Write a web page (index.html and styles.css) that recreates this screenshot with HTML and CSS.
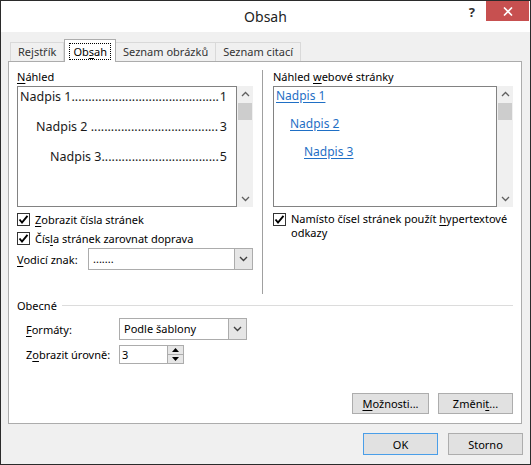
FILE: index.html
```html
<!DOCTYPE html>
<html lang="cs">
<head>
    <meta charset="UTF-8">
    <title>Obsah</title>
    <link rel="stylesheet" href="styles.css">
</head>
<body>
<div class="window">
    <div class="titlebar">
        <div class="title">Obsah</div>
        <div class="title-tools">
            <span class="help">?</span>
            <span class="close">
                <svg width="10" height="9" viewBox="0 0 10 9"><path d="M1 0.5 L9 8.5 M9 0.5 L1 8.5" stroke="#fff" stroke-width="1.6" fill="none"/></svg>
            </span>
        </div>
    </div>

    <div class="content">
        <div class="tabs">
            <div class="tab">Rejstřík</div>
            <div class="tab active"><span class="focus">Ob<u>s</u>ah</span></div>
            <div class="tab">Seznam obrázků</div>
            <div class="tab">Seznam citací</div>
        </div>

        <div class="panel">
            <div class="columns">
                <!-- print preview -->
                <div class="col col-left">
                    <div class="label"><u>N</u>áhled</div>
                    <div class="preview">
                        <div class="preview-box toc">
                            <div class="toc-line lvl1"><span>Nadpis 1</span><span class="leader">............................................</span><span>1</span></div>
                            <div class="toc-line lvl2"><span>Nadpis 2</span><span class="leader">&nbsp;......................................</span><span>3</span></div>
                            <div class="toc-line lvl3"><span>Nadpis 3</span><span class="leader">...................................</span><span>5</span></div>
                        </div>
                        <div class="scrollbar">
                            <div class="sb-btn"><svg width="9" height="6" viewBox="0 0 9 6"><path d="M1 5 L4.5 1.5 L8 5" stroke="#606060" stroke-width="1.3" fill="none"/></svg></div>
                            <div class="sb-thumb"></div>
                            <div class="sb-track"></div>
                            <div class="sb-btn"><svg width="9" height="6" viewBox="0 0 9 6"><path d="M1 1 L4.5 4.5 L8 1" stroke="#606060" stroke-width="1.3" fill="none"/></svg></div>
                        </div>
                    </div>

                    <div class="check-row first">
                        <span class="checkbox"><svg width="11" height="11" viewBox="0 0 11 11"><path d="M1.5 5.5 L4 8.5 L9.5 1.8" stroke="#000" stroke-width="1.9" fill="none"/></svg></span>
                        <span><u>Z</u>obrazit čísla stránek</span>
                    </div>
                    <div class="check-row">
                        <span class="checkbox"><svg width="11" height="11" viewBox="0 0 11 11"><path d="M1.5 5.5 L4 8.5 L9.5 1.8" stroke="#000" stroke-width="1.9" fill="none"/></svg></span>
                        <span>Čís<u>l</u>a stránek zarovnat doprava</span>
                    </div>
                    <div class="field-row">
                        <span class="leader-label"><u>V</u>odicí znak:</span>
                        <div class="combo grow">
                            <span class="combo-value">.......</span>
                            <span class="combo-btn"><svg width="9" height="6" viewBox="0 0 9 6"><path d="M1 1 L4.5 4.5 L8 1" stroke="#404040" stroke-width="1.4" fill="none"/></svg></span>
                        </div>
                    </div>
                </div>

                <div class="divider"></div>

                <!-- web preview -->
                <div class="col col-right">
                    <div class="label">Náhled <u>w</u>ebové stránky</div>
                    <div class="preview">
                        <div class="preview-box web">
                            <a class="web-link lvl1">Nadpis 1</a>
                            <a class="web-link lvl2">Nadpis 2</a>
                            <a class="web-link lvl3">Nadpis 3</a>
                        </div>
                        <div class="scrollbar">
                            <div class="sb-btn"><svg width="9" height="6" viewBox="0 0 9 6"><path d="M1 5 L4.5 1.5 L8 5" stroke="#606060" stroke-width="1.3" fill="none"/></svg></div>
                            <div class="sb-thumb"></div>
                            <div class="sb-track"></div>
                            <div class="sb-btn"><svg width="9" height="6" viewBox="0 0 9 6"><path d="M1 1 L4.5 4.5 L8 1" stroke="#606060" stroke-width="1.3" fill="none"/></svg></div>
                        </div>
                    </div>

                    <div class="check-row first multi">
                        <span class="checkbox"><svg width="11" height="11" viewBox="0 0 11 11"><path d="M1.5 5.5 L4 8.5 L9.5 1.8" stroke="#000" stroke-width="1.9" fill="none"/></svg></span>
                        <span class="multi-text">Namísto čísel stránek použít <u>h</u>ypertextové<br>odkazy</span>
                    </div>
                </div>
            </div>

            <div class="group-title">
                <span>Obecné</span>
                <span class="group-line"></span>
            </div>
            <div class="field-row formats">
                <span class="field-label"><u>F</u>ormáty:</span>
                <div class="combo formats-combo">
                    <span class="combo-value">Podle šablony</span>
                    <span class="combo-btn"><svg width="9" height="6" viewBox="0 0 9 6"><path d="M1 1 L4.5 4.5 L8 1" stroke="#404040" stroke-width="1.4" fill="none"/></svg></span>
                </div>
            </div>
            <div class="field-row levels">
                <span class="field-label">Z<u>o</u>brazit úrovně:</span>
                <div class="spin">
                    <span class="spin-value">3</span>
                    <span class="spin-btns">
                        <span class="spin-btn"><svg width="7" height="4" viewBox="0 0 7 4"><path d="M0 4 L3.5 0 L7 4 Z" fill="#000"/></svg></span>
                        <span class="spin-btn"><svg width="7" height="4" viewBox="0 0 7 4"><path d="M0 0 L3.5 4 L7 0 Z" fill="#000"/></svg></span>
                    </span>
                </div>
            </div>

            <div class="panel-actions">
                <button type="button" class="btn btn-options"><u>M</u>ožnosti...</button>
                <button type="button" class="btn btn-change">Změni<u>t</u>...</button>
            </div>
        </div>

        <div class="dialog-actions">
            <button type="button" class="btn btn-dialog default">OK</button>
            <button type="button" class="btn btn-dialog">Storno</button>
        </div>
    </div>
</div>
</body>
</html>
```

FILE: styles.css
```css
body {
    margin: 0;
    font-family: "Noto Sans", sans-serif;
    font-size: 11px;
    color: #000;
}

u {
    text-underline-offset: 2px;
}

.window {
    width: 531px;
    height: 465px;
    box-sizing: border-box;
    border: 1px solid #2b2b2b;
    background: #f0f0f0;
    display: flex;
    flex-direction: column;
}

/* title bar */
.titlebar {
    height: 31px;
    flex: none;
    background: #fff;
    display: grid;
    grid-template-columns: 1fr auto 1fr;
    align-items: start;
}

.title {
    grid-column: 2;
    font-size: 14px;
    line-height: 31px;
    color: #222;
}

.title-tools {
    grid-column: 3;
    justify-self: end;
    display: flex;
    align-items: flex-start;
}

.help {
    font-size: 13px;
    font-weight: bold;
    line-height: 13px;
    color: #333;
    margin: 5px 11px 0 0;
}

.close {
    width: 43px;
    height: 20px;
    margin-right: 1px;
    background: #c75050;
    display: flex;
    align-items: center;
    justify-content: center;
}

.content {
    flex: 1;
    padding: 7px 7px 0 7px;
    display: flex;
    flex-direction: column;
}

/* tabs */
.tabs {
    display: flex;
    align-items: flex-end;
    height: 23px;
    margin: 0 0 -1px 2px;
    position: relative;
    z-index: 1;
}

.tab {
    height: 19px;
    box-sizing: border-box;
    margin-bottom: 1px;
    padding: 0 7px;
    border: 1px solid #d9d9d9;
    border-bottom: 0;
    line-height: 17px;
    color: #333;
    background: #f0f0f0;
}

.tab + .tab {
    border-left: 0;
}

.tab.active {
    height: 23px;
    margin-bottom: 0;
    padding: 3px 4px 0;
    border: 1px solid #adadad;
    border-bottom: 0;
    background: #fff;
    color: #000;
}

.tab.active + .tab {
    border-left: 0;
}

.focus {
    display: inline-block;
    border: 1px dotted #000;
    padding: 0 3px;
    line-height: 15px;
}

/* panel */
.panel {
    height: 363px;
    box-sizing: border-box;
    margin-right: 1px;
    padding: 7px 8px 9px 8px;
    border: 1px solid #acacac;
    background: #fff;
    display: flex;
    flex-direction: column;
}

.columns {
    display: flex;
    height: 225px;
    flex: none;
}

.col-left {
    width: 236px;
}

.col-right {
    width: 240px;
}

.divider {
    width: 1px;
    background: #a0a0a0;
    margin: 1px 10px 0 9px;
}

.label {
    height: 17px;
    line-height: 16px;
}

.preview {
    display: flex;
    height: 121px;
}

.preview-box {
    flex: 1;
    border: 1px solid #828282;
    display: flex;
    flex-direction: column;
    overflow: hidden;
}

.scrollbar {
    width: 16px;
    background: #f0f0f0;
    display: flex;
    flex-direction: column;
}

.sb-btn {
    height: 16px;
    display: flex;
    align-items: center;
    justify-content: center;
}

.sb-thumb {
    height: 17px;
    margin: 1px 1px 0;
    background: #cdcdcd;
}

.sb-track {
    flex: 1;
}

/* print preview lines */
.toc {
    padding: 0 9px 0 2px;
    gap: 10px;
}

.toc-line {
    display: flex;
    justify-content: space-between;
    height: 20px;
    line-height: 20px;
    font-size: 12.5px;
    color: #1a1a1a;
    white-space: nowrap;
}

.toc-line .leader {
    flex: 1;
}

.toc-line.lvl2 {
    padding-left: 16px;
}

.toc-line.lvl3 {
    padding-left: 30px;
}

/* web preview lines */
.web {
    padding: 0 0 0 2px;
    gap: 10px;
}

.web-link {
    height: 18px;
    line-height: 18px;
    font-size: 12px;
    color: #1f6fc5;
    text-decoration: underline;
    text-underline-offset: 2px;
    align-self: flex-start;
}

.web-link.lvl2 {
    margin-left: 14px;
}

.web-link.lvl3 {
    margin-left: 28px;
}

/* checkboxes */
.check-row {
    display: flex;
    align-items: center;
    gap: 5px;
    height: 19px;
}

.check-row.first {
    margin-top: 3px;
}

.check-row.multi {
    align-items: flex-start;
    height: auto;
}

.checkbox {
    width: 13px;
    height: 13px;
    box-sizing: border-box;
    border: 1px solid #333;
    background: #fff;
    display: flex;
    align-items: center;
    justify-content: center;
    flex: none;
}

.check-row.multi .checkbox {
    margin-top: 3px;
}

.multi-text {
    margin-top: 2px;
    line-height: 14px;
    white-space: nowrap;
}

/* fields */
.field-row {
    display: flex;
    align-items: center;
}

.leader-label {
    width: 71px;
}

.field-label {
    width: 102px;
    box-sizing: border-box;
    padding-left: 9px;
}

.combo {
    height: 22px;
    box-sizing: border-box;
    border: 1px solid #acacac;
    background: #fff;
    display: flex;
}

.combo.grow {
    flex: 1;
}

.combo-value {
    flex: 1;
    padding-left: 4px;
    line-height: 20px;
}

.combo-btn {
    width: 17px;
    border-left: 1px solid #acacac;
    background: #e6e6e6;
    display: flex;
    align-items: center;
    justify-content: center;
}

.group-title {
    display: flex;
    align-items: center;
    gap: 5px;
    height: 16px;
    margin-top: 3px;
}

.group-line {
    flex: 1;
    height: 1px;
    background: #dcdcdc;
}

.formats {
    margin-top: 5px;
}

.formats-combo {
    width: 128px;
}

.levels {
    margin-top: 5px;
}

.spin {
    width: 65px;
    height: 19px;
    box-sizing: border-box;
    border: 1px solid #acacac;
    display: flex;
}

.spin-value {
    flex: 1;
    padding-left: 2px;
    line-height: 17px;
}

.spin-btns {
    width: 15px;
    display: flex;
    flex-direction: column;
    border-left: 1px solid #acacac;
}

.spin-btn {
    flex: 1;
    background: #e6e6e6;
    display: flex;
    align-items: center;
    justify-content: center;
}

.spin-btn + .spin-btn {
    border-top: 1px solid #acacac;
}

/* buttons */
.btn {
    height: 21px;
    box-sizing: border-box;
    padding: 0;
    border: 1px solid #adadad;
    background: #e1e1e1;
    font-family: inherit;
    font-size: 11px;
    color: #000;
}

.panel-actions {
    margin-top: auto;
    display: flex;
    justify-content: flex-end;
    gap: 9px;
}

.btn-options {
    width: 77px;
}

.btn-change {
    width: 75px;
}

.dialog-actions {
    margin-top: 9px;
    display: flex;
    justify-content: flex-end;
    gap: 10px;
}

.btn-dialog {
    width: 75px;
    height: 22px;
}

.btn-dialog.default {
    border-color: #4a9ee8;
}
```
